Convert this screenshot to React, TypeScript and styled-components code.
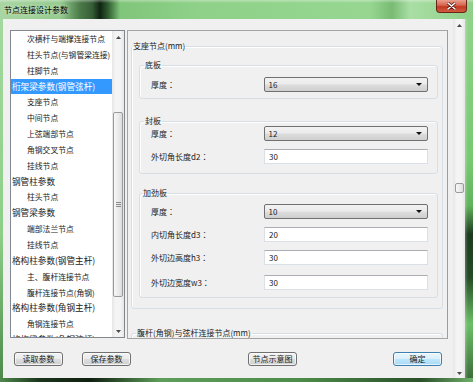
import React from "react"
import styled, { createGlobalStyle } from "styled-components"

const GlobalStyle = createGlobalStyle`
  html, body { margin: 0; padding: 0; background: #6aa866; }
  body { font-family: "Noto Sans CJK SC", "Microsoft YaHei", sans-serif; }
  * { box-sizing: border-box; }
`

const Window = styled.div`
  width: 473px;
  height: 382px;
  display: flex;
  flex-direction: column;
  overflow: hidden;
`

const TitleBar = styled.div`
  height: 19px;
  flex: none;
  display: flex;
  justify-content: space-between;
  align-items: flex-start;
  padding-left: 4px;
  background:
    linear-gradient(180deg, rgba(255,255,255,0.35) 0, rgba(255,255,255,0) 3px),
    linear-gradient(90deg, #a8d6a2 0, #94ca8e 60px, #4b7a48 80px, #10251390 92px, #0f2413 100px, #2f5c2f 108px, #7fc57a 120px, #8fd189 200px, #96d691 370px, #79bb73 392px, #a9dea4 410px, #8ed088 473px);
`

const Title = styled.span`
  font-size: 8px;
  line-height: 19px;
  color: #000;
  text-shadow: 0 0 4px rgba(255,255,255,0.8);
`

const CloseBtn = styled.div`
  width: 31px;
  height: 13px;
  margin-right: 6px;
  border: 1px solid #6b2419;
  border-top: none;
  border-radius: 0 0 4px 4px;
  background: linear-gradient(180deg, #e9a08f 0, #d6624c 45%, #c23b22 55%, #d05a3f 100%);
  display: flex;
  align-items: center;
  justify-content: center;
`

const Frame = styled.div`
  flex: 1;
  display: flex;
  min-height: 0;
`

const LeftEdge = styled.div`
  width: 3px;
  background: linear-gradient(180deg, #a3d89e 0%, #8dcf87 60%, #4f8a4c 100%);
`

const RightEdge = styled.div`
  width: 8px;
  background:
    linear-gradient(90deg, rgba(255,255,255,0.25) 0, rgba(255,255,255,0) 3px),
    linear-gradient(180deg, #8fd389 0%, #76c870 40%, #5fb35a 52%, #1c3a1f 60%, #244c26 72%, #6cbf66 85%, #3d6e3b 100%);
`

const BottomEdge = styled.div`
  height: 4px;
  flex: none;
  background: linear-gradient(90deg, #4f8a4c 0, #1a331b 40px, #0f1f10 90px, #5e9e5a 160px, #4d8c49 300px, #2a4f2a 420px, #6fb06a 473px);
`

const Client = styled.div`
  width: 462px;
  display: flex;
  background: #f0f0f0;
  color: #1a1a1a;
`

const ContentCol = styled.div`
  flex: 1;
  display: flex;
  flex-direction: column;
  padding: 11px 0 0 7px;
`

const TopRow = styled.div`
  display: flex;
  gap: 2px;
  align-items: flex-start;
`

const ListBox = styled.div`
  width: 115px;
  height: 308px;
  border: 1px solid #828790;
  background: #fff;
  display: flex;
`

const ListItems = styled.div`
  flex: 1;
  overflow: hidden;
`

const Item = styled.div<{ $child?: boolean; $sel?: boolean }>`
  height: 15.85px;
  line-height: 15.85px;
  white-space: nowrap;
  padding-left: ${p => (p.$child ? 16 : 1)}px;
  font-size: ${p => (p.$child ? 7.8 : 8.6)}px;
  background: ${p => (p.$sel ? "#3399ff" : "transparent")};
  color: ${p => (p.$sel ? "#fff" : "#1a1a1a")};
`

const VScroll = styled.div<{ $w: number }>`
  width: ${p => p.$w}px;
  flex: none;
  display: flex;
  flex-direction: column;
  align-items: center;
  background: linear-gradient(90deg, #e6e6e6 0, #f4f4f4 30%, #f4f4f4 70%, #e6e6e6 100%);
`

const Arrow = styled.div<{ $h: number }>`
  height: ${p => p.$h}px;
  width: 100%;
  display: flex;
  align-items: center;
  justify-content: center;
  flex: none;
`

const Track = styled.div`
  flex: 1;
  width: 100%;
  display: flex;
  flex-direction: column;
  align-items: center;
`

const Thumb = styled.div<{ $top: number; $h: number; $w: number }>`
  margin-top: ${p => p.$top}px;
  height: ${p => p.$h}px;
  width: ${p => p.$w}px;
  border: 1px solid #9a9a9a;
  border-radius: 2px;
  background: linear-gradient(90deg, #f7f7f7 0, #ececec 50%, #dcdcdc 100%);
  display: flex;
  align-items: center;
  justify-content: center;
`

const Grip = styled.div`
  width: 5px;
  height: 5px;
  background: repeating-linear-gradient(180deg, #8a8a8a 0, #8a8a8a 1px, transparent 1px, transparent 2px);
`

const Panel = styled.div`
  width: 321px;
  height: 309px;
  border: 1px solid #a5a5a5;
  border-right-color: #9c9c9c;
  background: #f0f0f0;
  overflow: hidden;
  padding: 10px 4px 0 3px;
`

const Group = styled.fieldset<{ $mt?: number }>`
  margin: ${p => p.$mt ?? 0}px 0 0 0;
  padding: 0;
  min-width: 0;
  border: 1px solid #d5dfe5;
  border-radius: 3px;
  box-shadow: inset 1px 1px 0 #fff;
`

const Legend = styled.legend<{ $ml?: number }>`
  padding: 0 1px;
  margin-left: ${p => p.$ml ?? 0}px;
  font-size: 8px;
  line-height: 10px;
  color: #1a1a1a;
`

const GroupBody = styled.div<{ $pad: string }>`
  padding: ${p => p.$pad};
  display: flex;
  flex-direction: column;
`

const FieldRow = styled.div<{ $mt?: number }>`
  display: flex;
  align-items: center;
  height: 15px;
  margin-top: ${p => p.$mt ?? 0}px;
`

const Label = styled.span`
  width: 113px;
  font-size: 8px;
  white-space: nowrap;
`

const Colon = styled.span`
  font-family: "Noto Sans CJK TC", "Noto Sans CJK SC", sans-serif;
`

const Select = styled.div`
  width: 165px;
  height: 15px;
  border: 1px solid #707070;
  border-radius: 2px;
  background: linear-gradient(180deg, #f2f2f2 0, #ebebeb 48%, #dddddd 52%, #cfcfcf 100%);
  display: flex;
  align-items: center;
  justify-content: space-between;
  padding: 0 5px 0 4px;
  font-size: 8px;
`

const Caret = styled.span`
  width: 0;
  height: 0;
  border-left: 3px solid transparent;
  border-right: 3px solid transparent;
  border-top: 3px solid #111;
`

const TextInput = styled.input`
  width: 164px;
  height: 15px;
  border: 1px solid #dbdfe6;
  border-top-color: #abadb3;
  background: #fff;
  padding: 0 4px;
  margin: 0;
  font-family: "Noto Sans CJK SC", sans-serif;
  font-size: 8px;
  color: #1a1a1a;
  outline: none;
`

const Filler = styled.div`
  height: 40px;
`

const ButtonRow = styled.div`
  display: flex;
  margin-top: 13px;
`

const Button = styled.button<{ $ml: number; $default?: boolean }>`
  width: 49px;
  height: 14px;
  margin: 0 0 0 ${p => p.$ml}px;
  padding: 0;
  border: 1px solid ${p => (p.$default ? "#3c7fb1" : "#707070")};
  border-radius: 3px;
  background: ${p =>
    p.$default
      ? "linear-gradient(180deg, #eaf6fd 0, #d9f0fc 48%, #bee6fd 52%, #a7d9f5 100%)"
      : "linear-gradient(180deg, #f2f2f2 0, #ebebeb 48%, #dddddd 52%, #cfcfcf 100%)"};
  box-shadow: inset 0 0 0 1px rgba(255,255,255,0.7);
  font-family: "Noto Sans CJK SC", sans-serif;
  font-size: 8px;
  line-height: 12px;
  color: #1a1a1a;
`

const items = [
  { t: "次横杆与端撑连接节点", c: true },
  { t: "柱头节点(与钢管梁连接)", c: true },
  { t: "柱脚节点", c: true },
  { t: "桁架梁参数(钢管弦杆)", sel: true },
  { t: "支座节点", c: true },
  { t: "中间节点", c: true },
  { t: "上弦端部节点", c: true },
  { t: "角钢交叉节点", c: true },
  { t: "挂线节点", c: true },
  { t: "钢管柱参数" },
  { t: "柱头节点", c: true },
  { t: "钢管梁参数" },
  { t: "端部法兰节点", c: true },
  { t: "挂线节点", c: true },
  { t: "格构柱参数(钢管主杆)" },
  { t: "主、腹杆连接节点", c: true },
  { t: "腹杆连接节点(角钢)", c: true },
  { t: "格构柱参数(角钢主杆)" },
  { t: "角钢连接节点", c: true },
  { t: "格构梁参数(角钢弦杆)" },
]

function Tri({ up }: { up?: boolean }) {
  return (
    <svg width="5" height="3" viewBox="0 0 5 3">
      <path d={up ? "M0 3 L2.5 0 L5 3 Z" : "M0 0 L2.5 3 L5 0 Z"} fill="#4a4a4a" />
    </svg>
  )
}

function Field({ label, mt, children }: { label: string; mt?: number; children: React.ReactNode }) {
  return (
    <FieldRow $mt={mt}>
      <Label>{label}<Colon>：</Colon></Label>
      {children}
    </FieldRow>
  )
}

export default function App() {
  return (
    <>
      <GlobalStyle />
      <Window>
        <TitleBar>
          <Title>节点连接设计参数</Title>
          <CloseBtn>
            <svg width="9" height="8" viewBox="0 0 9 8">
              <path d="M1 1 L8 7 M8 1 L1 7" stroke="#5a1a10" strokeWidth="3" strokeLinecap="round" />
              <path d="M1 1 L8 7 M8 1 L1 7" stroke="#fff" strokeWidth="1.6" strokeLinecap="round" />
            </svg>
          </CloseBtn>
        </TitleBar>
        <Frame>
          <LeftEdge />
          <Client>
            <ContentCol>
              <TopRow>
                <ListBox>
                  <ListItems>
                    {items.map((it, i) => (
                      <Item key={i} $child={it.c} $sel={it.sel}>{it.t}</Item>
                    ))}
                  </ListItems>
                  <VScroll $w={12}>
                    <Arrow $h={12}><Tri up /></Arrow>
                    <Track>
                      <Thumb $top={69} $h={185} $w={10}><Grip /></Thumb>
                    </Track>
                    <Arrow $h={12}><Tri /></Arrow>
                  </VScroll>
                </ListBox>
                <Panel>
                  <Group>
                    <Legend>支座节点(mm)</Legend>
                    <GroupBody $pad="9px 4px 10px 7px">
                      <Group>
                        <Legend $ml={4}>底板</Legend>
                        <GroupBody $pad="7px 9px 6px 11px">
                          <Field label="厚度">
                            <Select>16<Caret /></Select>
                          </Field>
                        </GroupBody>
                      </Group>
                      <Group $mt={17}>
                        <Legend $ml={4}>封板</Legend>
                        <GroupBody $pad="0 9px 9px 11px">
                          <Field label="厚度">
                            <Select>12<Caret /></Select>
                          </Field>
                          <Field label="外切角长度d2" mt={8}>
                            <TextInput defaultValue="30" />
                          </Field>
                        </GroupBody>
                      </Group>
                      <Group $mt={14}>
                        <Legend $ml={2}>加劲板</Legend>
                        <GroupBody $pad="6px 9px 7px 11px">
                          <Field label="厚度">
                            <Select>10<Caret /></Select>
                          </Field>
                          <Field label="内切角长度d3" mt={8}>
                            <TextInput defaultValue="20" />
                          </Field>
                          <Field label="外切边高度h3" mt={8}>
                            <TextInput defaultValue="30" />
                          </Field>
                          <Field label="外切边宽度w3" mt={10}>
                            <TextInput defaultValue="30" />
                          </Field>
                        </GroupBody>
                      </Group>
                    </GroupBody>
                  </Group>
                  <Group $mt={19}>
                    <Legend $ml={4}>腹杆(角钢)与弦杆连接节点(mm)</Legend>
                    <Filler />
                  </Group>
                </Panel>
              </TopRow>
              <ButtonRow>
                <Button $ml={4}>读取参数</Button>
                <Button $ml={19}>保存参数</Button>
                <Button $ml={117}>节点示意图</Button>
                <Button $ml={96} $default>确定</Button>
              </ButtonRow>
            </ContentCol>
            <VScroll $w={12}>
              <Arrow $h={12}><Tri up /></Arrow>
              <Track>
                <Thumb $top={152} $h={10} $w={9} />
              </Track>
              <Arrow $h={10}><Tri /></Arrow>
            </VScroll>
          </Client>
          <RightEdge />
        </Frame>
        <BottomEdge />
      </Window>
    </>
  )
}
